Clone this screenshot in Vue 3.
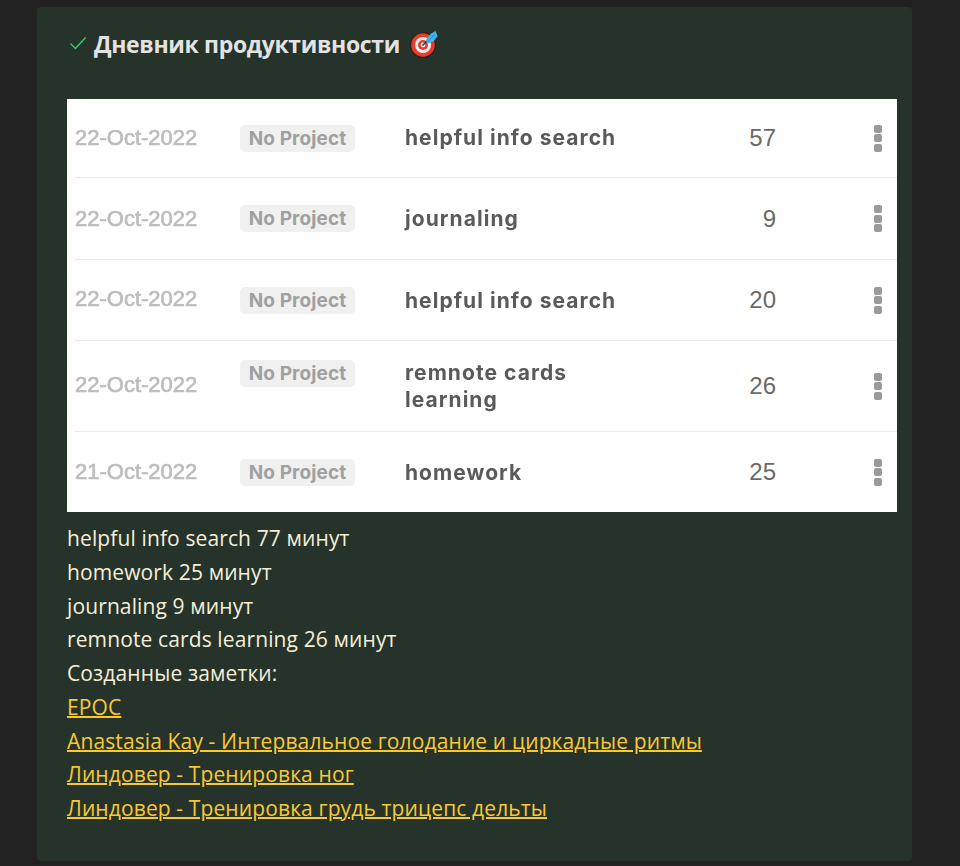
<script setup>
const rows = [
  { date: '22-Oct-2022', name: ['helpful info search'], mins: 57 },
  { date: '22-Oct-2022', name: ['journaling'], mins: 9 },
  { date: '22-Oct-2022', name: ['helpful info search'], mins: 20 },
  { date: '22-Oct-2022', name: ['remnote cards', 'learning'], mins: 26, tall: true },
  { date: '21-Oct-2022', name: ['homework'], mins: 25 }
]
const summary = [
  'helpful info search 77 минут',
  'homework 25 минут',
  'journaling 9 минут',
  'remnote cards learning 26 минут',
  'Созданные заметки:'
]
const links = [
  'EPOC',
  'Anastasia Kay - Интервальное голодание и циркадные ритмы',
  'Линдовер - Тренировка ног',
  'Линдовер - Тренировка грудь трицепс дельты'
]
</script>

<template>
  <main class="page">
    <section class="card">
      <h1 class="title">
        <svg class="check" viewBox="0 0 18 14" width="18" height="14" aria-hidden="true">
          <path d="M1.5 7.5 L6.5 12.5 L16.5 1.5" fill="none" stroke="#2fd163" stroke-width="1.4" />
        </svg>
        <span class="title-text">Дневник продуктивности</span>
        <svg class="dart" viewBox="0 0 28 28" width="28" height="28" aria-hidden="true">
          <circle cx="13" cy="15" r="13" fill="#2a1f20" />
          <circle cx="13" cy="15" r="11.8" fill="#ea3a2c" />
          <circle cx="13" cy="15" r="8" fill="#f6f0ec" />
          <circle cx="13" cy="15" r="5" fill="#ea3a2c" />
          <circle cx="13" cy="15" r="2.4" fill="#f6f0ec" />
          <path d="M12.5 15.5 L19 9" stroke="#17435f" stroke-width="1.6" />
          <path d="M15.5 10.5 L20.5 4 L25.5 1 L27.5 6 L24 11 L18 13.5 Z" fill="#3db6ee" />
          <path d="M18 11.5 L24.5 4.5" stroke="#1f8fd0" stroke-width="1" />
        </svg>
      </h1>

      <div class="shot">
        <div v-for="(row, i) in rows" :key="i" class="row" :class="{ tall: row.tall }">
          <span class="date">{{ row.date }}</span>
          <span class="tag-col"><span class="tag">No Project</span></span>
          <span class="name"><span v-for="line in row.name" :key="line" class="name-line">{{ line }}</span></span>
          <span class="mins">{{ row.mins }}</span>
          <span class="dots"><i></i><i></i><i></i></span>
        </div>
      </div>

      <div class="notes">
        <p v-for="line in summary" :key="line">{{ line }}</p>
        <p v-for="link in links" :key="link"><a href="#" class="link">{{ link }}</a></p>
      </div>
    </section>
  </main>
</template>

<style>
html, body { margin: 0; background: #212121; }
</style>

<style scoped>
.page {
  height: 866px;
  box-sizing: border-box;
  padding: 7px 48px 5px 37px;
  overflow: hidden;
  font-family: "Open Sans", "Noto Sans", sans-serif;
}
.card {
  height: 854px;
  box-sizing: border-box;
  background: #25332a;
  border-radius: 4px;
  padding: 19px 15px 0 30px;
}
.title {
  display: flex;
  align-items: center;
  height: 36px;
  margin: 0 0 37px;
  color: #e3e3e3;
  font-size: 23px;
  font-weight: 700;
  letter-spacing: -0.35px;
}
.check { margin: 0 7px 3px 2px; }
.dart { margin: 0 0 1px 10px; }
.shot {
  width: 830px;
  height: 413px;
  background: #fff;
  box-sizing: border-box;
  padding-left: 8px;
  font-family: "Liberation Sans", Arial, sans-serif;
}
.row {
  display: flex;
  align-items: center;
  height: 81px;
  box-sizing: border-box;
  border-bottom: 1px solid #ebebeb;
}
.row:nth-child(1) { height: 79px; }
.row:nth-child(2) { height: 82px; }
.row.tall { height: 91px; }
.row:last-child { height: 80px; border-bottom: 0; }
.date {
  width: 165px;
  color: #bdbdbd;
  font-size: 22px;
  -webkit-text-stroke: 0.7px #bdbdbd;
  filter: blur(0.3px);
}
.row:nth-child(3) .date,
.row:nth-child(4) .date { margin-bottom: 2px; }
.tag-col { width: 165px; }
.tag {
  display: inline-block;
  width: 115px;
  height: 27px;
  line-height: 28px;
  background: #f0f0f0;
  border-radius: 5px;
  color: #a0a0a0;
  font-family: "Inter", sans-serif;
  font-size: 19px;
  font-weight: 700;
  text-align: center;
  letter-spacing: 0.1px;
}
.tall .tag-col { align-self: flex-start; padding-top: 19px; }
.name {
  width: 260px;
  color: #5a5a5a;
  font-family: "Inter", sans-serif;
  font-size: 21px;
  font-weight: 700;
  line-height: 27px;
  letter-spacing: 1.05px;
  filter: blur(0.3px);
}
.row:nth-child(1) .name { padding-bottom: 2px; }
.tall .name { margin-top: -1px; }
.name-line { display: block; }
.mins {
  width: 111px;
  text-align: right;
  color: #6a6a6a;
  font-size: 24px;
}
.dots {
  display: flex;
  flex-direction: column;
  gap: 1.5px;
  margin-left: 98px;
}
.dots i {
  display: block;
  width: 8px;
  height: 8px;
  border-radius: 2px;
  background: #9a9a9a;
}
.notes {
  padding-top: 10px;
  color: #f5eed9;
  font-size: 21px;
  letter-spacing: 0.12px;
  line-height: 33.75px;
}
.notes p { margin: 0; }
.link {
  color: #f9c933;
  text-decoration: underline;
  text-decoration-thickness: 2px;
}
</style>
